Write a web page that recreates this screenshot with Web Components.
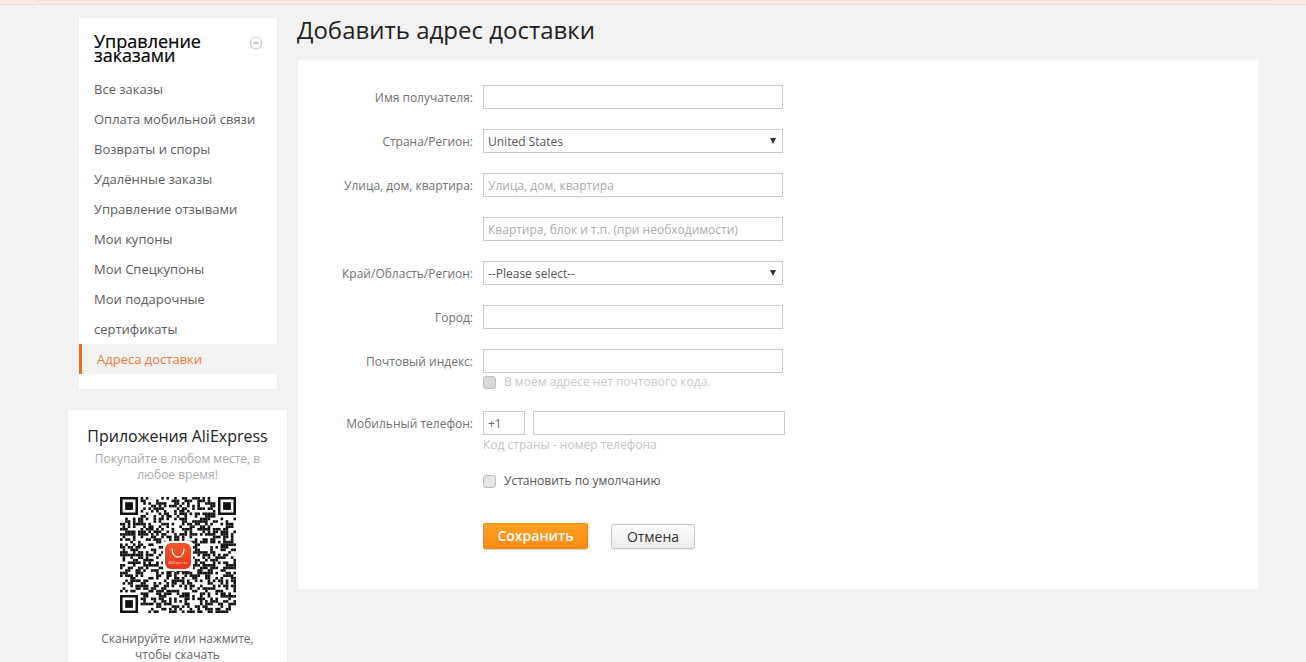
<!DOCTYPE html>
<html lang="ru"><head><meta charset="utf-8"><title>Добавить адрес доставки</title>
<style>
html,body{margin:0;padding:0;height:662px;overflow:hidden;background:#f2f2f2;font-family:"Open Sans","Noto Sans",sans-serif;color:#333}
</style></head><body>
<ae-page>
  <ae-topstrip slot="top"></ae-topstrip>
  <ae-side slot="side">
    <ae-order-menu heading="Управление заказами">
      <ae-menu-item>Все заказы</ae-menu-item>
      <ae-menu-item>Оплата мобильной связи</ae-menu-item>
      <ae-menu-item>Возвраты и споры</ae-menu-item>
      <ae-menu-item>Удалённые заказы</ae-menu-item>
      <ae-menu-item>Управление отзывами</ae-menu-item>
      <ae-menu-item>Мои купоны</ae-menu-item>
      <ae-menu-item>Мои Спецкупоны</ae-menu-item>
      <ae-menu-item>Мои подарочные сертификаты</ae-menu-item>
      <ae-menu-item active>Адреса доставки</ae-menu-item>
    </ae-order-menu>
    <ae-app-card></ae-app-card>
  </ae-side>
  <ae-main slot="main" heading="Добавить адрес доставки">
    <ae-form-row label="Имя получателя:"><ae-field></ae-field></ae-form-row>
    <ae-form-row label="Страна/Регион:"><ae-select>United States</ae-select></ae-form-row>
    <ae-form-row label="Улица, дом, квартира:"><ae-field hint>Улица, дом, квартира</ae-field></ae-form-row>
    <ae-form-row><ae-field hint>Квартира, блок и т.п. (при необходимости)</ae-field></ae-form-row>
    <ae-form-row label="Край/Область/Регион:"><ae-select>--Please select--</ae-select></ae-form-row>
    <ae-form-row label="Город:"><ae-field></ae-field></ae-form-row>
    <ae-form-row label="Почтовый индекс:" gap="21"><ae-field></ae-field><ae-check muted>В моём адресе нет почтового кода.</ae-check></ae-form-row>
    <ae-form-row label="Мобильный телефон:" gap="19"><ae-phone code="+1"></ae-phone><ae-note>Код страны - номер телефона</ae-note></ae-form-row>
    <ae-form-row gap="27"><ae-check class="default">Установить по умолчанию</ae-check></ae-form-row>
    <ae-form-row gap="40"><ae-actions><ae-button primary>Сохранить</ae-button><ae-button>Отмена</ae-button></ae-actions></ae-form-row>
  </ae-main>
</ae-page>
<script>
function def(name, css, html, init){
  customElements.define(name, class extends HTMLElement{
    connectedCallback(){
      if(this.shadowRoot) return;
      const r=this.attachShadow({mode:'open'});
      r.innerHTML='<style>'+css+'</style>'+(typeof html==='function'?html(this):html);
      if(init) init(this,r);
    }
  });
}
def('ae-page',`:host{display:block;height:662px;overflow:hidden}
.cols{display:flex;margin-top:13px;align-items:flex-start}
.side{display:block;width:220px;margin-left:68px;flex:none}
.main{display:block;margin-left:9px;width:961px;flex:none}`,
`<slot name="top"></slot><div class="cols"><div class="side"><slot name="side"></slot></div><div class="main"><slot name="main"></slot></div></div>`);
def('ae-topstrip',`:host{display:block;height:5px;background:#fbeae3;box-sizing:border-box;border-bottom:1px solid #e9dcd6}
div{height:1px;margin:0 35px 0 35px;background:#f5ddd4}`,`<div></div>`);
def('ae-side',`:host{display:block}`,`<slot></slot>`);
def('ae-order-menu',`:host{display:block;width:198px;height:371px;margin-left:11px;background:#fff;box-sizing:border-box;box-shadow:0 0 1px #d8d8d8}
.head{display:flex;justify-content:space-between;padding:16px 15px 0 15px;height:56px;box-sizing:border-box}
h2{margin:0;font-weight:400;font-size:18px;line-height:14px;color:#000;width:125px;-webkit-text-stroke:.2px #000}
svg{margin-top:3px;flex:none}`,
el=>`<div class="head"><h2>${el.getAttribute('heading')}</h2><svg width="12" height="12" viewBox="0 0 12 12"><rect x=".5" y=".5" width="11" height="11" rx="4" fill="#fff" stroke="#c4c4c4"/><path d="M3.5 6h5" stroke="#888" stroke-width="1"/></svg></div><slot></slot>`);
def('ae-menu-item',`:host{display:block;font-size:13px;line-height:30px;color:#5c5c5c;padding:0 15px}
:host([active]){background:#f2f2f2;color:#ea7a3c;border-left:3px solid #e8701f}`,`<slot></slot>`);
def('ae-app-card',`:host{display:block;box-sizing:border-box;width:219px;height:252px;margin-top:21px;background:#fff;box-shadow:0 0 1px #d8d8d8;text-align:center;padding-top:15px}
h3{margin:0;font-weight:400;font-size:16px;line-height:22px;color:#222}
p{margin:0;font-size:12px;line-height:16px}
.sub{color:#aaa;padding:4px 14px 0}
ae-qr{margin:14px auto 0}
.foot{color:#666;padding:18px 28px 0}`,
`<h3>Приложения AliExpress</h3><p class="sub">Покупайте в любом месте, в любое время!</p><ae-qr></ae-qr><p class="foot">Сканируйте или нажмите, чтобы скачать</p>`);
def('ae-qr',`:host{display:block;width:116px;height:116px;position:relative}
svg{display:block;filter:blur(.35px)}
.logo{position:absolute;left:45px;top:46px;width:26px;height:26px;border-radius:6px;background:linear-gradient(#f4562a,#e5391a)}
.logo svg{position:absolute;left:0;top:0;filter:none}
text{font:400 4px "Open Sans",sans-serif;fill:#ffd9cc}`,
()=>{
 const n=45,m=116/n;let s='',seed=20231;
 const rnd=()=>{seed=(seed*1103515245+12345)&0x7fffffff;return (seed>>16)&1;};
 const inF=(x,y)=>(x<8&&y<8)||(x>=n-8&&y<8)||(x<8&&y>=n-8);
 const cell=(x,y,w=1,h=1)=>`<rect x="${(x*m).toFixed(2)}" y="${(y*m).toFixed(2)}" width="${(w*m+.05).toFixed(2)}" height="${(h*m+.05).toFixed(2)}"/>`;
 for(let y=0;y<n;y++)for(let x=0;x<n;x++){const b=rnd();if(!inF(x,y)&&b)s+=cell(x,y);}
 const finder=(x,y,sz)=>{let o=`<path fill-rule="evenodd" d="M${x*m} ${y*m}h${sz*m}v${sz*m}h${-sz*m}zM${(x+1)*m} ${(y+1)*m}v${(sz-2)*m}h${(sz-2)*m}v${-(sz-2)*m}z"/>`;o+=cell(x+2,y+2,sz-4,sz-4);return o;};
 s+=finder(0,0,7)+finder(n-7,0,7)+finder(0,n-7,7);
 return `<svg width="116" height="116" viewBox="0 0 116 116" fill="#111" role="img" aria-label="QR"><rect width="116" height="116" fill="#fff"/>${s}<rect x="43" y="44" width="30" height="30" rx="4" fill="#fff"/></svg><div class="logo"><svg width="26" height="26" viewBox="0 0 26 26"><path d="M7 6c.4 5.500 2.800 8 6 8s5.600-2.500 6-8" fill="none" stroke="#fff" stroke-width="1.300" stroke-linecap="round"/><text x="13" y="21" text-anchor="middle">AliExpress</text></svg></div>`;
});
def('ae-main',`:host{display:block}
h1{margin:0;font-weight:400;font-size:24px;line-height:23px;color:#222;height:42px}
.panel{background:#fff;height:529px;box-sizing:border-box;padding-top:25px;margin-left:1px}`,
el=>`<h1>${el.getAttribute('heading')}</h1><div class="panel"><slot></slot></div>`);
def('ae-form-row',`:host{display:block}
.row{display:flex}
.l{width:175px;flex:none;text-align:right;font-size:12px;line-height:25px;height:24px;color:#707070}
.c{margin-left:10px;width:304px}`,
el=>`<div class="row" style="margin-bottom:${el.getAttribute('gap')||20}px"><div class="l">${el.getAttribute('label')||''}</div><div class="c"><slot></slot></div></div>`);
def('ae-field',`:host{display:block;box-sizing:border-box;width:300px;height:24px;border:1px solid #c9c9c9;background:#fff;padding:0 4px;font-size:12px;line-height:23px;color:#333;white-space:nowrap;overflow:hidden}
:host([hint]){color:#aaa}`,`<slot></slot>`);
def('ae-select',`:host{display:flex;justify-content:space-between;align-items:center;box-sizing:border-box;width:300px;height:24px;border:1px solid #c9c9c9;background:#fff;padding:0 6px 0 4px;font-size:12px;color:#555}
i{width:0;height:0;border:3.500px solid transparent;border-top:6px solid #333;border-bottom:0}`,`<span><slot></slot></span><i></i>`);
def('ae-check',`:host{display:flex;align-items:center;gap:8px;font-size:12px;line-height:16px;color:#555;height:16px;margin-top:1px}
:host([muted]){color:#c8c8c8}
:host([muted]) b{background:#d9d9d9}
b{display:block;box-sizing:border-box;width:13px;height:13px;border:1px solid #bdbdbd;border-radius:3px;background:#e6e6e6;flex:none}`,`<b></b><span><slot></slot></span>`);
def('ae-phone',`:host{display:flex;gap:8px;width:302px}
.a{box-sizing:border-box;height:24px;border:1px solid #c9c9c9;padding:0 4px;font-size:12px;line-height:23px;color:#666}
.code{width:42px}.num{width:252px}`,el=>`<div class="a code">${el.getAttribute('code')}</div><div class="a num"></div>`);
def('ae-note',`:host{display:block;font-size:12px;line-height:16px;color:#c4c4c4;margin-top:2px}`,`<slot></slot>`);
def('ae-actions',`:host{display:flex;gap:23px;align-items:center;width:260px}`,`<slot></slot>`);
def('ae-button',`:host{display:block;box-sizing:border-box;width:84px;height:25px;border:1px solid #c6c6c6;border-radius:2px;background:linear-gradient(#fcfcfc,#ececec);text-align:center;font-size:14px;line-height:23px;color:#333;box-shadow:0 1px 1px rgba(0,0,0,.08)}
:host([primary]){width:105px;height:26px;border:1px solid #ea8a12;background:linear-gradient(#ffa021,#fb8a12);color:#fff;font-weight:600;line-height:24px;box-shadow:0 1px 1px rgba(0,0,0,.15)}`,`<slot></slot>`);
</script>
</body></html>
